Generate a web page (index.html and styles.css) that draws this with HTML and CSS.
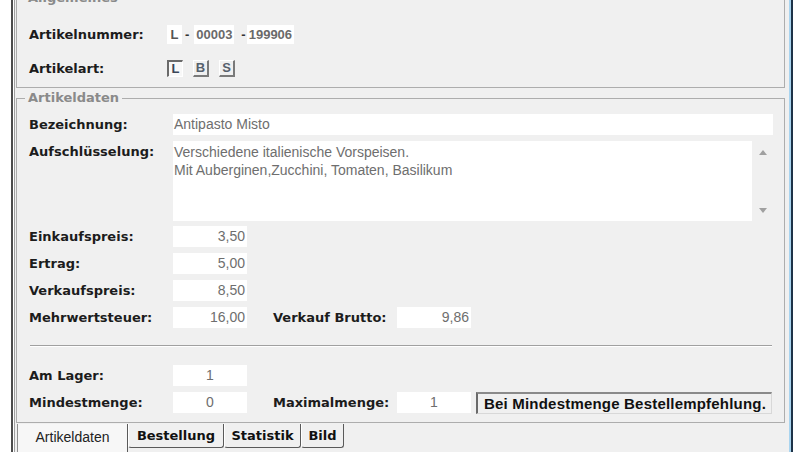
FILE: index.html
```html
<!DOCTYPE html>
<html lang="de">
<head>
<meta charset="utf-8">
<title>Artikel</title>
<link rel="stylesheet" href="styles.css">
</head>
<body>
<div class="window">
  <div class="pane">
    <fieldset class="group g-allg">
      <legend>Allgemeines</legend>
      <div class="row r1">
        <span class="lbl">Artikelnummer:</span>
        <span class="nbox nb-l">L</span><span class="dash d1">-</span><span class="nbox nb-2">00003</span><span class="dash d2">-</span><span class="nbox nb-3">199906</span>
      </div>
      <div class="row r2">
        <span class="lbl">Artikelart:</span>
        <span class="tog on">L</span><span class="tog">B</span><span class="tog">S</span>
      </div>
    </fieldset>

    <fieldset class="group g-daten">
      <legend>Artikeldaten</legend>
      <div class="row">
        <span class="lbl">Bezeichnung:</span>
        <span class="fld wide">Antipasto Misto</span>
      </div>
      <div class="row tall">
        <span class="lbl">Aufschlüsselung:</span>
        <div class="memo">
          <div class="memo-text">Verschiedene italienische Vorspeisen.<br>Mit Auberginen,Zucchini, Tomaten, Basilikum</div>
          <div class="memo-bar">
            <svg width="8" height="5" viewBox="0 0 8 5"><polygon points="0,5 4,0 8,5" fill="#a0a0a0"/></svg>
            <svg width="8" height="5" viewBox="0 0 8 5"><polygon points="0,0 8,0 4,5" fill="#a0a0a0"/></svg>
          </div>
        </div>
      </div>
      <div class="row after-tall">
        <span class="lbl">Einkaufspreis:</span>
        <span class="fld num">3,50</span>
      </div>
      <div class="row">
        <span class="lbl">Ertrag:</span>
        <span class="fld num">5,00</span>
      </div>
      <div class="row">
        <span class="lbl">Verkaufspreis:</span>
        <span class="fld num">8,50</span>
      </div>
      <div class="row">
        <span class="lbl">Mehrwertsteuer:</span>
        <span class="fld num">16,00</span>
        <span class="lbl mid">Verkauf Brutto:</span>
        <span class="fld num">9,86</span>
      </div>
      <div class="sep"></div>
      <div class="row">
        <span class="lbl">Am Lager:</span>
        <span class="fld num ctr">1</span>
      </div>
      <div class="row">
        <span class="lbl">Mindestmenge:</span>
        <span class="fld num ctr">0</span>
        <span class="lbl mid">Maximalmenge:</span>
        <span class="fld num ctr">1</span>
        <span class="hint">Bei Mindestmenge Bestellempfehlung.</span>
      </div>
    </fieldset>
  </div>

  <div class="tabs">
    <span class="tab sel t1">Artikeldaten</span>
    <span class="tab t2">Bestellung</span>
    <span class="tab t3">Statistik</span>
    <span class="tab t4">Bild</span>
  </div>
</div>
</body>
</html>
```

FILE: styles.css
```css
* { box-sizing: border-box; }

html, body {
  margin: 0;
  height: 100%;
  background: #ffffff;
  overflow: hidden;
}

.window {
  margin-left: 11px;
  width: 782px;
  height: 452px;
  background: #f0f0f0;
  border-left: 2px solid #4d4d4d;
  border-right: 2px solid #1d3348;
  box-shadow: inset 1px 0 0 #ffffff, inset 2px 0 0 #a0a0a0, inset -2px 0 0 #a9d4ef;
  padding: 0 2px;
  overflow: hidden;
}

.pane {
  margin-top: -9px;
  padding: 0 4px 0 1px;
}

.group {
  margin: 0;
  padding: 0 11px 0 12px;
  border: 1px solid #adadad;
  min-width: 0;
}

.group legend {
  margin-left: -4px;
  padding: 0 3px;
  font: bold 13px/14px "DejaVu Sans", sans-serif;
  color: #8a8a8a;
}

.g-allg {
  padding-top: 19px;
  padding-bottom: 9px;
}

.g-daten {
  margin-top: 3px;
  padding-top: 9px;
  padding-bottom: 9px;
}

.row {
  display: flex;
  align-items: center;
  height: 21px;
}

.g-daten .row + .row { margin-top: 6px; }
.g-daten .row.after-tall { margin-top: 5px; }

.lbl {
  flex: none;
  width: 144px;
  font: bold 13px "DejaVu Sans", sans-serif;
  color: #1c1c1c;
  white-space: nowrap;
}

.lbl.mid {
  width: 124px;
  margin-left: 26px;
}

/* Allgemeines */
.g-allg .lbl { width: 138px; }
.g-allg .row { height: 20px; }
.g-allg .r2 { margin-top: 14px; }

.nbox {
  height: 19px;
  background: #ffffff;
  font: bold 13px/19px "Liberation Sans", sans-serif;
  color: #6a6a6a;
  padding-left: 2px;
}
.nb-l { width: 15px; padding-left: 0; text-align: center; color: #555; }
.nb-2 { width: 40px; }
.nb-3 { width: 47px; }

.dash {
  font: bold 13px "Liberation Sans", sans-serif;
  color: #333;
}
.d1 { margin: 0 5px 0 3px; }
.d2 { margin: 0 1px 0 7px; }

.tog {
  width: 16px;
  height: 17px;
  margin-right: 10px;
  display: flex;
  align-items: center;
  justify-content: center;
  font: bold 13px "Liberation Sans", sans-serif;
  color: #56606c;
  border-style: solid;
  border-width: 1px 2px 2px 1px;
  border-color: #ffffff #7a7a7a #7a7a7a #ffffff;
}
.tog.on {
  border-width: 2px 1px 1px 2px;
  border-color: #6a6a6a #ffffff #ffffff #6a6a6a;
  background: #f8f8f8;
  color: #3a4658;
}

/* fields */
.fld {
  flex: none;
  height: 21px;
  background: #ffffff;
  font: 14px/21px "Liberation Sans", sans-serif;
  color: #6e6e6e;
  padding: 0 1px;
  white-space: nowrap;
}
.fld.wide { flex: 1; }
.fld.num {
  width: 74px;
  text-align: right;
  padding-right: 2px;
}
.fld.num.ctr {
  text-align: center;
  padding: 0;
}

.row.tall {
  height: 80px;
  align-items: flex-start;
}
.row.tall .lbl { line-height: 21px; }

.memo {
  flex: 1;
  display: flex;
  height: 80px;
}
.memo-text {
  flex: 1;
  background: #ffffff;
  padding: 2px 1px;
  font: 14px/18px "Liberation Sans", sans-serif;
  color: #6e6e6e;
}
.memo-bar {
  width: 21px;
  flex: none;
  display: flex;
  flex-direction: column;
  justify-content: space-between;
  align-items: center;
  padding: 9px 0 8px;
}
.memo-bar svg { display: block; }

.sep {
  height: 2px;
  margin: 17px 1px 18px 1px;
  border-top: 1px solid #a0a0a0;
  border-bottom: 1px solid #ffffff;
}

.hint {
  margin-left: 5px;
  width: 296px;
  height: 22px;
  border-style: solid;
  border-width: 2px 1px 1px 2px;
  border-color: #8a8a8a #d8d8d8 #d8d8d8 #6a6a6a;
  padding-left: 6px;
  font: bold 15px/19px "Liberation Sans", sans-serif;
  letter-spacing: 0.2px;
  color: #111111;
  white-space: nowrap;
}

/* tabs */
.tabs {
  display: flex;
  align-items: flex-start;
  margin-top: 1px;
  padding-left: 2px;
}

.tab {
  flex: none;
  height: 24px;
  padding-top: 1px;
  line-height: 22px;
  text-align: center;
  font: bold 13px/22px "DejaVu Sans", sans-serif;
  color: #111111;
  border-left: 1px solid #ffffff;
  border-right: 1px solid #5a5a5a;
  border-bottom: 1px solid #5a5a5a;
  border-radius: 0 0 3px 3px;
  white-space: nowrap;
}

.tab.sel {
  height: 32px;
  padding-top: 4px;
  background: #f7f7f7;
  border-left: 1px solid #8f8f8f;
  border-bottom: none;
  border-radius: 0;
  font: 14px/18px "Liberation Sans", sans-serif;
  color: #222222;
}

.t1 { width: 111px; }
.t2 { width: 96px; }
.t3 { width: 77px; }
.t4 { width: 43px; }
```
